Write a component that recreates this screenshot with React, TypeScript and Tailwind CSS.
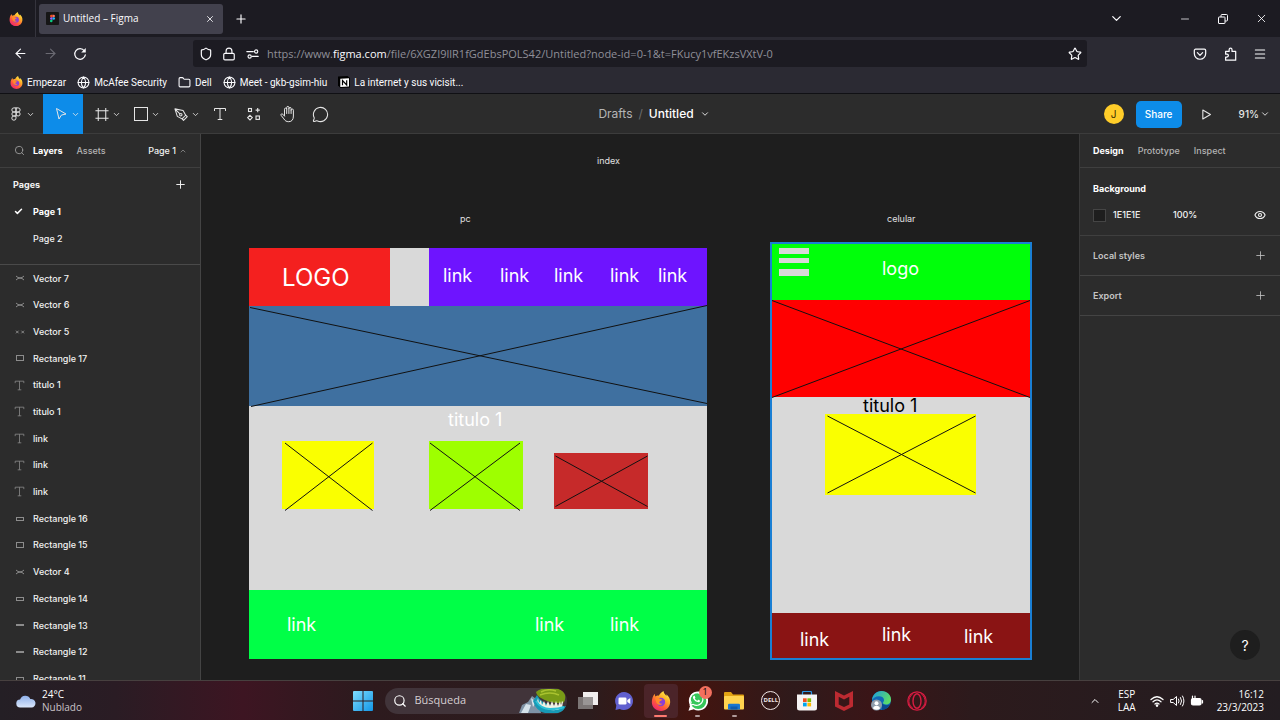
import type { ReactNode } from "react";
import {
  ArrowLeft,
  ArrowRight,
  Check,
  ChevronDown,
  ChevronUp,
  Eye,
  Folder,
  Globe,
  Lock,
  Menu,
  MessageCircle,
  Minus,
  Plus,
  Search,
  Shield,
  Star,
  X,
} from "lucide-react";
import { FaWhatsapp } from "react-icons/fa";

/* ---------- Icons ---------- */

function FirefoxIcon({ id, className }: { id: string; className: string }) {
  return (
    <svg viewBox="0 0 24 24" className={className} aria-hidden="true">
      <defs>
        <linearGradient id={id} x1="0.85" y1="0.05" x2="0.25" y2="0.95">
          <stop offset="0" stopColor="#fff44f" />
          <stop offset="0.35" stopColor="#ffb028" />
          <stop offset="0.7" stopColor="#ff5a3a" />
          <stop offset="1" stopColor="#f0286e" />
        </linearGradient>
      </defs>
      <path
        d="M1 13.500C1 9 2.300 6 4.500 3.300c0 1.400.3 2.400.9 3.200C6.500 5.500 8 5.200 9.300 5.600 10.800 3.500 12.500 1.200 15 0c.2 2.800 2 4 3.500 6 .2-.8.1-1.500-.1-2.200C21.500 6.300 23.200 9.500 23 13.500 22.700 19.500 18 24 12 24S1 19.500 1 13.500z"
        fill={`url(#${id})`}
      />
      <circle cx="12" cy="13.200" r="5" fill="#8a3fd6" />
      <path d="M5 8.500c2-.8 4.500-.4 6 1 1.200.1 2.200.4 2.800 1.200-1.500.2-2.300 1.200-3.300 1.800-1.500.9.300 3.600 3.300 2.500-1.500 2.500-6.500 2-7.500-1.500z" fill="#ff8a2a" />
    </svg>
  );
}

function FigmaOutline() {
  return (
    <svg viewBox="0 0 12 16" className="h-[14px] w-[18px]" fill="none" stroke="currentColor" strokeWidth="1.1">
      <path d="M6 1H3.600a2.300 2.300 0 0 0 0 4.700H6zM6 1h2.400a2.300 2.300 0 0 1 0 4.700H6zM6 5.700H3.600a2.300 2.300 0 0 0 0 4.600H6zM6 10.300H3.600a2.400 2.400 0 1 0 2.400 2.400z" />
      <circle cx="8.400" cy="8" r="2.300" />
    </svg>
  );
}

function FigmaColor() {
  return (
    <svg viewBox="0 0 14 14" className="size-[13px]" aria-hidden="true">
      <rect width="14" height="14" rx="1" fill="#161616" />
      <path d="M7 3H5.700a1.350 1.350 0 0 0 0 2.700H7z" fill="#f24e1e" />
      <path d="M7 3h1.300a1.350 1.350 0 0 1 0 2.700H7z" fill="#ff7262" />
      <path d="M7 5.700H5.700a1.350 1.350 0 0 0 0 2.700H7z" fill="#a259ff" />
      <circle cx="8.350" cy="7.050" r="1.350" fill="#1abcfe" />
      <path d="M7 8.400H5.700A1.350 1.350 0 1 0 7 9.750z" fill="#0acf83" />
    </svg>
  );
}

function ReloadIcon() {
  return (
    <svg viewBox="0 0 16 16" className="size-[14px]" fill="none" stroke="currentColor" strokeWidth="1.400">
      <path d="M13 4.300A6.100 6.100 0 1 0 14.100 9" strokeLinecap="round" />
      <path d="M14.600 1v5.200H9.400z" fill="currentColor" stroke="none" />
    </svg>
  );
}

function PermissionIcon() {
  return (
    <svg viewBox="0 0 16 12" className="h-[10px] w-[13px]" fill="none" stroke="currentColor" strokeWidth="1.400" strokeLinecap="round">
      <path d="M1 3h8M7.500 9H15" />
      <circle cx="12.500" cy="3" r="2" />
      <circle cx="4.500" cy="9" r="2" />
    </svg>
  );
}

function PocketIcon() {
  return (
    <svg viewBox="0 0 16 16" className="size-[14px]" fill="none" stroke="currentColor" strokeWidth="1.400" strokeLinecap="round" strokeLinejoin="round">
      <path d="M3 2.500h10A1.500 1.500 0 0 1 14.500 4v3.500a6.500 6.500 0 0 1-13 0V4A1.500 1.500 0 0 1 3 2.500z" />
      <path d="M5 6.500l3 3 3-3" />
    </svg>
  );
}

function ExtensionIcon() {
  return (
    <svg viewBox="0 0 16 16" className="size-[14px]" fill="none" stroke="currentColor" strokeWidth="1.400" strokeLinejoin="round">
      <path d="M3 15V11.500h1.500a1.600 1.600 0 0 0 0-3.300H3V5h4V3a1.600 1.600 0 0 1 3.300 0v2H14.500v10z" />
    </svg>
  );
}

function RestoreIcon() {
  return (
    <svg viewBox="0 0 10 10" className="size-[10px]" fill="none" stroke="currentColor" strokeWidth="1">
      <rect x="0.500" y="3" width="6.500" height="6.500" rx="0.500" />
      <path d="M3 3V1.500a1 1 0 0 1 1-1h4.500a1 1 0 0 1 1 1V6a1 1 0 0 1-1 1H7" />
    </svg>
  );
}

function NotionIcon() {
  return (
    <svg viewBox="0 0 12 12" className="size-[12px]" aria-hidden="true">
      <path d="M0 0.500L9.500 0 12 2v9.500L2.500 12 0 9.500z" fill="#000" />
      <path d="M2.300 2.800L11 2.300v8.200l-8.700.6z" fill="#fff" />
      <path d="M4.500 9.300V4.500L8.700 9V4.200" fill="none" stroke="#000" strokeWidth="1.200" />
    </svg>
  );
}

function MoveIcon() {
  return (
    <svg viewBox="0 0 14 14" className="h-[14px] w-[18px]" fill="none" stroke="currentColor" strokeWidth="1" strokeLinejoin="round">
      <path d="M2.500 1.500l9.500 5.500-4.600 1.100L5 12z" />
    </svg>
  );
}

function FrameIcon() {
  return (
    <svg viewBox="0 0 16 16" className="h-[15px] w-[18px]" fill="none" stroke="currentColor" strokeWidth="1.100">
      <path d="M4 1v14M12 1v14M1 4h14M1 12h14" />
    </svg>
  );
}

function RectIcon() {
  return (
    <svg viewBox="0 0 16 16" className="h-[16px] w-[18px]" fill="none" stroke="currentColor" strokeWidth="1">
      <rect x="1.500" y="1.500" width="13" height="13" />
    </svg>
  );
}

function PenIcon() {
  return (
    <svg viewBox="0 0 16 16" className="h-[15px] w-[18px]" fill="none" stroke="currentColor" strokeWidth="1.100" strokeLinejoin="round">
      <path d="M1.500 2l8.700 1.800 2.800 5-3.900 3.900-5-2.700zM1.500 2l5.300 5.300M13 8.700l1.700 1.600-4 4-1.600-1.600" />
      <circle cx="7.800" cy="8.200" r="1.300" />
    </svg>
  );
}

function TextToolIcon({ className }: { className: string }) {
  return (
    <svg viewBox="0 0 14 14" className={className} fill="none" stroke="currentColor" strokeWidth="1">
      <path d="M1.500 4V1.500h11V4M7 1.500v11M4.700 12.500h4.600" />
    </svg>
  );
}

function ResourcesIcon() {
  return (
    <svg viewBox="0 0 14 14" className="size-[14px]" fill="none" stroke="currentColor" strokeWidth="1.100">
      <rect x="1.500" y="1.500" width="3" height="3" />
      <path d="M10.700 1v4.200M8.600 3.100h4.200M3 8.300l2.300 2.300L3 12.900.700 10.600z" />
      <rect x="9" y="9" width="3.400" height="3.400" />
    </svg>
  );
}

function HandIcon() {
  return (
    <svg viewBox="0 0 18 18" className="size-[18px]" fill="none" stroke="currentColor" strokeWidth="1" strokeLinecap="round" strokeLinejoin="round">
      <path d="M5.500 10.500V4.200a1.100 1.100 0 0 1 2.200 0V8.500M7.700 4V2.500a1.100 1.100 0 0 1 2.200 0V8.500M9.900 3.500a1.100 1.100 0 0 1 2.200 0v5M12.100 5.200a1.100 1.100 0 0 1 2.300 0V11c0 3.500-1.500 5.700-4.700 5.700-2.300 0-3.700-.9-4.800-2.800L2.100 10.400c-.7-1.200.8-2.200 1.700-1.200l1.700 2" />
    </svg>
  );
}

function PlayIcon() {
  return (
    <svg viewBox="0 0 12 12" className="size-[11px]" fill="none" stroke="currentColor" strokeWidth="1.200" strokeLinejoin="round">
      <path d="M2 1.200l8.300 4.800L2 10.800z" />
    </svg>
  );
}

type LayerKind = "cross" | "dots" | "box" | "text" | "bar" | "flat";

function LayerIcon({ kind }: { kind: LayerKind }) {
  if (kind === "text") return <TextToolIcon className="size-[11px]" />;
  return (
    <svg viewBox="0 0 10 10" className="size-[10px]" fill="none" stroke="currentColor" strokeWidth="1">
      {kind === "cross" && <path d="M1 3q4 4 8 0M1 7q4-4 8 0" />}
      {kind === "dots" && <path d="M1 3.700l2.600 2.600M3.600 3.700L1 6.300M6.400 3.700L9 6.300M9 3.700L6.400 6.300" />}
      {kind === "box" && <rect x="1.500" y="2.500" width="7" height="5" />}
      {kind === "flat" && <rect x="1.500" y="3.500" width="7" height="3" />}
      {kind === "bar" && <path d="M1 5h8" strokeWidth="2" />}
    </svg>
  );
}

/* ---------- Browser chrome ---------- */

function IconButton({ label, className, children }: { label: string; className: string; children: ReactNode }) {
  return (
    <button type="button" aria-label={label} className={`flex shrink-0 items-center justify-center ${className}`}>
      {children}
    </button>
  );
}

function BrowserChrome() {
  return (
    <header className="shrink-0 border-b border-[#101014] bg-[#2b2a33] font-['Open_Sans','Noto_Sans',sans-serif] text-[#fbfbfe]">
      <div className="flex h-[37px] items-center bg-[#1c1b22]">
        <div className="flex h-full w-9 items-center border-r border-[#35343d] pl-[9px]">
          <FirefoxIcon id="ff-window" className="size-[14px]" />
        </div>
        <div className="ml-[3px] flex h-[30px] w-[184px] items-center rounded-[3px] bg-[#42414d] pr-2 pl-[7px]">
          <FigmaColor />
          <span className="ml-1 flex-1 text-[10px]">Untitled – Figma</span>
          <IconButton label="Close tab" className="size-[11px]">
            <X size={10} strokeWidth={2} />
          </IconButton>
        </div>
        <IconButton label="New tab" className="w-9">
          <Plus size={14} strokeWidth={2} />
        </IconButton>
        <div className="flex-1" />
        <IconButton label="List all tabs" className="mr-[30px] w-10">
          <ChevronDown size={15} strokeWidth={2} />
        </IconButton>
        <IconButton label="Minimize" className="w-[38px]">
          <Minus size={12} strokeWidth={1.5} />
        </IconButton>
        <IconButton label="Restore" className="w-[38px]">
          <RestoreIcon />
        </IconButton>
        <IconButton label="Close window" className="w-[38px]">
          <X size={13} strokeWidth={1.6} />
        </IconButton>
      </div>

      <div className="flex h-[33px] items-center px-[5px]">
        <IconButton label="Back" className="w-[30px]">
          <ArrowLeft size={15} strokeWidth={1.8} />
        </IconButton>
        <IconButton label="Forward" className="w-[30px] text-[#6b6a73]">
          <ArrowRight size={15} strokeWidth={1.8} />
        </IconButton>
        <IconButton label="Reload" className="w-[30px]">
          <ReloadIcon />
        </IconButton>
        <div className="mx-[98px] flex h-[27px] flex-1 items-center rounded-[3px] bg-[#1c1b22] pr-[5px] pl-[6px]">
          <Shield size={14} strokeWidth={2} />
          <Lock size={14} strokeWidth={2} className="ml-[9px]" />
          <span className="ml-[10px]">
            <PermissionIcon />
          </span>
          <span className="ml-2 flex-1 pt-px text-[11px] text-[#8f8f98]">
            https://www.<span className="text-[#fbfbfe]">figma.com</span>
            /file/6XGZI9llR1fGdEbsPOLS42/Untitled?node-id=0-1&amp;t=FKucy1vfEKzsVXtV-0
          </span>
          <IconButton label="Bookmark this page" className="size-[15px]">
            <Star size={14} strokeWidth={2} />
          </IconButton>
        </div>
        <IconButton label="Save to Pocket" className="w-[30px]">
          <PocketIcon />
        </IconButton>
        <IconButton label="Extensions" className="w-[30px]">
          <ExtensionIcon />
        </IconButton>
        <IconButton label="Open application menu" className="w-[30px]">
          <Menu size={14} strokeWidth={1.8} />
        </IconButton>
      </div>

      <nav aria-label="Bookmarks" className="flex h-[23px] items-center gap-[11px] pt-px pl-[10px] font-['Roboto','Open_Sans',sans-serif] text-[10px]">
        <a href="#empezar" className="flex items-center gap-1">
          <FirefoxIcon id="ff-bookmark" className="size-[13px]" />
          Empezar
        </a>
        <a href="#mcafee" className="flex items-center gap-1">
          <Globe size={13} strokeWidth={2} />
          McAfee Security
        </a>
        <a href="#dell" className="flex items-center gap-1">
          <Folder size={13} strokeWidth={2} />
          Dell
        </a>
        <a href="#meet" className="flex items-center gap-1">
          <Globe size={13} strokeWidth={2} />
          Meet - gkb-gsim-hiu
        </a>
        <a href="#notion" className="flex items-center gap-1">
          <NotionIcon />
          La internet y sus vicisit...
        </a>
      </nav>
    </header>
  );
}

/* ---------- Editor ---------- */

function ToolWithMenu({ label, className, children }: { label: string; className: string; children: ReactNode }) {
  return (
    <button type="button" aria-label={label} className={`flex h-full shrink-0 items-center gap-px ${className}`}>
      {children}
      <ChevronDown size={9} strokeWidth={2.2} />
    </button>
  );
}

function EditorToolbar() {
  return (
    <div className="grid h-10 shrink-0 grid-cols-[1fr_auto_1fr] items-center border-b border-[#3c3c3c] bg-[#2c2c2c] text-[#e6e6e6]">
      <div className="flex h-10 items-center">
        <ToolWithMenu label="Main menu" className="w-[43px] pl-[7px]">
          <FigmaOutline />
        </ToolWithMenu>
        <ToolWithMenu label="Move" className="w-10 bg-[#0d8ce9] pl-[9px]">
          <MoveIcon />
        </ToolWithMenu>
        <ToolWithMenu label="Frame" className="w-10 pl-[10px]">
          <FrameIcon />
        </ToolWithMenu>
        <ToolWithMenu label="Rectangle" className="w-10 pl-[9px]">
          <RectIcon />
        </ToolWithMenu>
        <ToolWithMenu label="Pen" className="w-10 pl-[9px]">
          <PenIcon />
        </ToolWithMenu>
        <IconButton label="Text" className="w-[34px]">
          <TextToolIcon className="size-[14px]" />
        </IconButton>
        <IconButton label="Resources" className="w-[34px]">
          <ResourcesIcon />
        </IconButton>
        <IconButton label="Hand tool" className="w-[33px]">
          <HandIcon />
        </IconButton>
        <IconButton label="Comment" className="w-[33px]">
          <MessageCircle size={17} strokeWidth={1.5} />
        </IconButton>
      </div>
      <div className="flex items-center pl-[28px] text-[12px]">
        <span className="text-[#b5b5b5]">Drafts</span>
        <span className="px-[6px] text-[#6d6d6d]">/</span>
        <button type="button" className="flex items-center gap-[6px] font-medium text-white">
          Untitled
          <ChevronDown size={10} strokeWidth={2} />
        </button>
      </div>
      <div className="flex items-center justify-end pr-[10px]">
        <span className="flex size-5 items-center justify-center rounded-full bg-[#ffcd29] text-[10px] text-[#3a2d00]">J</span>
        <button type="button" className="ml-3 h-[27px] w-[46px] rounded-[5px] bg-[#0d8ce9] text-[10px] font-medium text-white">
          Share
        </button>
        <IconButton label="Present" className="w-[50px]">
          <PlayIcon />
        </IconButton>
        <button type="button" className="ml-[7px] flex items-center gap-px text-[10px] font-medium">
          91%
          <ChevronDown size={10} strokeWidth={2.2} />
        </button>
      </div>
    </div>
  );
}

const layers: { name: string; kind: LayerKind }[] = [
  { name: "Vector 7", kind: "cross" },
  { name: "Vector 6", kind: "cross" },
  { name: "Vector 5", kind: "dots" },
  { name: "Rectangle 17", kind: "box" },
  { name: "titulo 1", kind: "text" },
  { name: "titulo 1", kind: "text" },
  { name: "link", kind: "text" },
  { name: "link", kind: "text" },
  { name: "link", kind: "text" },
  { name: "Rectangle 16", kind: "flat" },
  { name: "Rectangle 15", kind: "box" },
  { name: "Vector 4", kind: "cross" },
  { name: "Rectangle 14", kind: "flat" },
  { name: "Rectangle 13", kind: "bar" },
  { name: "Rectangle 12", kind: "bar" },
  { name: "Rectangle 11", kind: "flat" },
];

function LayersPanel() {
  return (
    <aside className="flex w-[201px] shrink-0 flex-col border-r border-[#444444] bg-[#2c2c2c] text-[9px] font-medium text-[#f2f2f2]">
      <div className="flex h-[34px] shrink-0 items-center border-b border-[#3f3f3f] pr-[13px] pl-[14px]">
        <IconButton label="Search layers" className="mr-2 w-[11px] text-[#9a9a9a]">
          <Search size={11} strokeWidth={2} />
        </IconButton>
        <button type="button" className="font-bold text-white">Layers</button>
        <button type="button" className="ml-[14px] text-[#b3b3b3]">Assets</button>
        <button type="button" className="ml-auto flex items-center gap-[3px]">
          Page 1
          <ChevronUp size={8} strokeWidth={2.5} className="text-[#8a8a8a]" />
        </button>
      </div>
      <section className="shrink-0 border-b border-[#4a4a4a] pt-[3px] pb-3">
        <div className="flex h-[27px] items-center justify-between pr-[13px] pl-[13px]">
          <h2 className="font-bold">Pages</h2>
          <IconButton label="Add page" className="size-[14px]">
            <Plus size={13} strokeWidth={1.8} />
          </IconButton>
        </div>
        <ul>
          <li className="flex h-[27px] items-center pl-[14px] font-bold text-white">
            <Check size={9} strokeWidth={4} className="mr-[10px]" />
            Page 1
          </li>
          <li className="flex h-[27px] items-center pl-[33px]">Page 2</li>
        </ul>
      </section>
      <div className="min-h-0 flex-1 overflow-hidden">
        <ul className="flex h-[427px] flex-col">
          {layers.map((layer, index) => (
            <li key={index} className="flex flex-1 items-center pl-[14px]">
              <span className="mr-2 flex w-[11px] justify-center text-[#8c8c8c]">
                <LayerIcon kind={layer.kind} />
              </span>
              {layer.name}
            </li>
          ))}
        </ul>
      </div>
    </aside>
  );
}

function CanvasText({ className, children }: { className: string; children: ReactNode }) {
  return <span className={`absolute leading-6 whitespace-nowrap ${className}`}>{children}</span>;
}

const desktopLinks = [
  { place: "left-[194px] top-[16px]" },
  { place: "left-[251px] top-[16px]" },
  { place: "left-[305px] top-[16px]" },
  { place: "left-[361px] top-[16px]" },
  { place: "left-[409px] top-[16px]" },
  { place: "left-[38px] top-[365px]" },
  { place: "left-[286px] top-[365px]" },
  { place: "left-[361px] top-[365px]" },
];

function DesktopFrame() {
  return (
    <div className="absolute top-[114px] left-[48px] h-[411px] w-[458px] bg-[#d9d9d9] text-[18px] text-white">
      <div className="absolute top-0 left-0 h-[58px] w-[141px] bg-[#f4201f]" />
      <div className="absolute top-0 left-[180px] h-[58px] w-[278px] bg-[#6e14ff]" />
      <div className="absolute top-[58px] left-0 h-[100px] w-[458px] bg-[#3f70a0]" />
      <div className="absolute top-[193px] left-[33px] h-[68px] w-[92px] bg-[#faff00]" />
      <div className="absolute top-[193px] left-[180px] h-[68px] w-[94px] bg-[#9eff00]" />
      <div className="absolute top-[205px] left-[305px] h-[56px] w-[94px] bg-[#c62a2a]" />
      <div className="absolute top-[342px] left-0 h-[69px] w-[458px] bg-[#00ff47]" />
      <svg viewBox="0 0 458 411" className="absolute inset-0 size-full" fill="none" stroke="#111" strokeWidth="1">
        <path d="M1 59.500L458 155.500M2 158.500L458 57.500" />
        <path d="M36 195L123.500 262.500M36 262.500L123.500 195" />
        <path d="M181 195L271 262.500M181 262.500L271 195" />
        <path d="M306.500 208L398.500 258.500M306.500 258.500L398.500 208" />
      </svg>
      <CanvasText className="top-[18px] left-[33px] text-[24px]">LOGO</CanvasText>
      <CanvasText className="top-[160px] left-[199px]">titulo 1</CanvasText>
      {desktopLinks.map((link) => (
        <CanvasText key={link.place} className={link.place}>
          link
        </CanvasText>
      ))}
    </div>
  );
}

function MobileFrame() {
  return (
    <div className="absolute top-[108px] left-[569px] h-[418px] w-[262px] border-2 border-[#1a7fd4] bg-[#d9d9d9] text-[18px] text-white">
      <div className="absolute inset-x-0 top-0 h-[56px] bg-[#00ff0a]" />
      <div className="absolute top-[4px] left-[7px] h-[6px] w-[30px] bg-[#d9d9d9]" />
      <div className="absolute top-[14px] left-[7px] h-[5px] w-[30px] bg-[#d9d9d9]" />
      <div className="absolute top-[25px] left-[7px] h-[7px] w-[30px] bg-[#d9d9d9]" />
      <div className="absolute inset-x-0 top-[56px] h-[97px] bg-[#ff0000]" />
      <div className="absolute top-[170px] left-[53px] h-[81px] w-[151px] bg-[#faff00]" />
      <div className="absolute inset-x-0 bottom-0 h-[45px] bg-[#8a1414]" />
      <svg viewBox="0 0 258 414" className="absolute inset-0 size-full" fill="none" stroke="#111" strokeWidth="1">
        <path d="M0 56.500L258 153.500M0 153.500L258 56.500" />
        <path d="M55.500 172L203.500 249M55.500 249L203.500 172" />
      </svg>
      <CanvasText className="top-[13px] left-[110px]">logo</CanvasText>
      <CanvasText className="top-[150px] left-[91px] text-black">titulo 1</CanvasText>
      <CanvasText className="top-[384px] left-[28px]">link</CanvasText>
      <CanvasText className="top-[379px] left-[110px]">link</CanvasText>
      <CanvasText className="top-[381px] left-[192px]">link</CanvasText>
    </div>
  );
}

function Canvas() {
  return (
    <main className="relative min-w-0 flex-1 overflow-hidden bg-[#1e1e1e] text-[#e0e0e0]">
      <CanvasText className="top-[15px] left-[396px] text-[9px]">index</CanvasText>
      <CanvasText className="top-[73px] left-[259px] text-[9px]">pc</CanvasText>
      <CanvasText className="top-[73px] left-[686px] text-[9px]">celular</CanvasText>
      <DesktopFrame />
      <MobileFrame />
    </main>
  );
}

function DesignPanel() {
  return (
    <aside className="relative w-[201px] shrink-0 border-l border-[#3a3a3a] bg-[#2c2c2c] text-[9px] font-medium text-[#f2f2f2]">
      <div className="flex h-[34px] items-center gap-[14px] border-b border-[#3f3f3f] pl-[13px] text-[#b3b3b3]">
        <button type="button" className="font-bold text-white">Design</button>
        <button type="button">Prototype</button>
        <button type="button">Inspect</button>
      </div>
      <section className="border-b border-[#3f3f3f] px-[13px] pt-[7px] pb-[7px]">
        <h2 className="flex h-[27px] items-center font-bold text-white">Background</h2>
        <div className="flex h-[26px] items-center">
          <span className="size-[13px] border border-[#454545] bg-[#1e1e1e]" />
          <span className="ml-[7px] w-[60px]">1E1E1E</span>
          <span>100%</span>
          <IconButton label="Toggle background" className="ml-auto w-[14px]">
            <Eye size={12} strokeWidth={2.2} />
          </IconButton>
        </div>
      </section>
      {["Local styles", "Export"].map((title) => (
        <section key={title} className="flex h-10 items-center justify-between border-b border-[#444444] px-[13px] text-[#c4c4c4]">
          <h2 className="font-semibold">{title}</h2>
          <IconButton label={`Add ${title}`} className="w-[14px]">
            <Plus size={13} strokeWidth={1.5} />
          </IconButton>
        </section>
      ))}
      <button
        type="button"
        aria-label="Help"
        className="absolute right-5 bottom-5 flex size-[30px] items-center justify-center rounded-full bg-[#1e1e1e] text-[14px] font-normal text-white"
      >
        ?
      </button>
    </aside>
  );
}

/* ---------- Taskbar ---------- */

function WeatherIcon() {
  return (
    <svg viewBox="0 0 20 14" className="h-[14px] w-5" aria-hidden="true">
      <defs>
        <linearGradient id="cloud" x1="0" y1="0" x2="0" y2="1">
          <stop offset="0" stopColor="#8fb0ea" />
          <stop offset="1" stopColor="#dbe7fb" />
        </linearGradient>
      </defs>
      <path d="M4.500 13.500a4 4 0 0 1-.4-8A5.500 5.500 0 0 1 14.300 5a4.300 4.300 0 1 1 1.200 8.500z" fill="url(#cloud)" />
    </svg>
  );
}

function WindowsIcon() {
  return (
    <svg viewBox="0 0 20 20" className="size-5" aria-hidden="true">
      <defs>
        <linearGradient id="win" x1="0" y1="0" x2="1" y2="1">
          <stop offset="0" stopColor="#7fdcff" />
          <stop offset="1" stopColor="#1296e6" />
        </linearGradient>
      </defs>
      <path d="M0 1q0-1 1-1h8.500v9.500H0zM10.500 0H19q1 0 1 1v8.500h-9.500zM0 10.500h9.500V20H1q-1 0-1-1zM10.500 10.500H20V19q0 1-1 1h-8.500z" fill="url(#win)" />
    </svg>
  );
}

function SearchArt() {
  return (
    <svg viewBox="0 0 48 24" className="h-6 w-12" aria-hidden="true">
      <path d="M0 24l3-8 6-3 4-6 7 5 2 12z" fill="#7f93a6" />
      <path d="M2 24l5-9 5 1-3 8zM12 9l5 4-3 5z" fill="#d5e2ea" />
      <path d="M14 12l4-6q4 8 14 10t15 1q-1 5-8 7H26Q17 22 14 12z" fill="#1799b5" />
      <path d="M17 3q4-4 14-4 13 0 15 7 1 6-2 8Q31 15 22 9q-4-2-5-6z" fill="#789a16" />
      <path d="M22 3q7-4 15-1M21 6q10-4 19 0" stroke="#a9c22f" strokeWidth="1.500" fill="none" />
      <path d="M19 9l1 5 2-3 1 5 2-4 2 5 2-5 2 5 2-5 2 5 2-5 2 5 2-5 1 4 1-4 1 1-1 6q-7 4-15 1T18 13z" fill="#f2f0e2" />
      <path d="M17 12q5 8 14 8t14-2" stroke="#2bc0d6" strokeWidth="2" fill="none" />
    </svg>
  );
}

function TaskViewIcon() {
  return (
    <svg viewBox="0 0 20 20" className="size-5" aria-hidden="true">
      <rect x="5" y="1" width="15" height="13" fill="#f1eeee" />
      <rect x="0" y="6" width="15" height="12" fill="#8a8585" opacity="0.850" />
    </svg>
  );
}

function ChatIcon() {
  return (
    <svg viewBox="0 0 20 20" className="size-5" aria-hidden="true">
      <path d="M10 1a9 9 0 1 1-4.300 16.900L1.500 19l.8-4.500A9 9 0 0 1 10 1z" fill="#6160cf" />
      <rect x="4.500" y="6.500" width="8" height="7" rx="1.300" fill="#fff" />
      <path d="M13.300 9l3-2v6l-3-2z" fill="#fff" />
    </svg>
  );
}

function WhatsappIcon() {
  return (
    <svg viewBox="0 0 20 20" className="size-5" aria-hidden="true">
      <path d="M10.300.500a9.500 9.500 0 1 1-4.500 17.700L.500 19.700l1.600-5A9.500 9.500 0 0 1 10.300.500z" fill="#fff" />
      <circle cx="10.300" cy="10" r="8" fill="#35c759" />
      <FaWhatsapp x="0.500" y="0" width="19" height="19" style={{ fill: "#ffffff" }} />
    </svg>
  );
}

function ExplorerIcon() {
  return (
    <svg viewBox="0 0 20 20" className="size-5" aria-hidden="true">
      <path d="M0 2q0-1 1-1h6l2 2.500h10q1 0 1 1V8H0z" fill="#e2a213" />
      <rect y="5" width="20" height="13.500" rx="1" fill="#ffd34f" />
      <path d="M4 18.500V14q0-1.300 1.300-1.300h9.400Q16 12.700 16 14v4.500z" fill="#1976d0" />
      <path d="M6.500 15.500h7v3h-7z" fill="#0f5bac" />
    </svg>
  );
}

function DellIcon() {
  return (
    <span className="flex size-[19px] items-center justify-center rounded-full border border-[#f0e6e6] text-[6px] font-bold text-[#f0e6e6]">
      DELL
    </span>
  );
}

function StoreIcon() {
  return (
    <svg viewBox="0 0 20 20" className="size-5" aria-hidden="true">
      <path d="M5.500 4V1.500q0-1 1-1h7q1 0 1 1V4" fill="none" stroke="#2a95e4" strokeWidth="1.200" />
      <path d="M0 3.500h20V17q0 2.500-2.500 2.500h-15Q0 19.500 0 17z" fill="#f6f4f4" />
      <path d="M6 7.300h3.700V11H6z" fill="#f25022" />
      <path d="M10.400 7.300h3.700V11h-3.700z" fill="#7fba00" />
      <path d="M6 11.700h3.700v3.700H6z" fill="#00a4ef" />
      <path d="M10.400 11.700h3.700v3.700h-3.700z" fill="#ffb900" />
    </svg>
  );
}

function McafeeIcon() {
  return (
    <svg viewBox="0 0 20 20" className="size-5" aria-hidden="true">
      <path d="M1 0l9 4.500L19 0v15.500L10 20l-9-4.500zM4.700 5.800v7.600L10 16l5.300-2.600V5.800L10 8.500z" fill="#bd2a31" fillRule="evenodd" />
    </svg>
  );
}

function EdgeIcon() {
  return (
    <svg viewBox="0 0 20 20" className="size-5" aria-hidden="true">
      <defs>
        <linearGradient id="edge" x1="0" y1="0" x2="1" y2="0.400">
          <stop offset="0" stopColor="#1c9be0" />
          <stop offset="1" stopColor="#5bdc6a" />
        </linearGradient>
      </defs>
      <circle cx="10.500" cy="9.500" r="9.500" fill="#1169b8" />
      <path d="M1 9.500C1 4 5.500 0 10.500 0 16 0 20 4 20 8.500c0 3-2 5-5 5-2 0-3-.8-3-1.700s1-1.200 1-2.800c0-2-2-3.700-5-3.700-3.500 0-6 2-7 4.200z" fill="url(#edge)" />
      <path d="M11 12.500q3 3 8 1-3 5-8 5.500z" fill="#0b4a8f" />
      <circle cx="5.500" cy="14" r="5.500" fill="#8f9dab" />
      <circle cx="5.500" cy="12.300" r="2" fill="#fff" />
      <path d="M2 17.500q.5-2.800 3.500-2.800T9 17.500q-3 2.700-7 0z" fill="#fff" />
    </svg>
  );
}

function OperaIcon() {
  return (
    <svg viewBox="0 0 20 20" className="size-5" fill="none" stroke="#d91c42" aria-hidden="true">
      <circle cx="10" cy="10" r="9.200" strokeWidth="1.200" />
      <ellipse cx="10" cy="10" rx="4" ry="7.300" strokeWidth="1.400" />
      <path d="M6 2.500C.500 7 .500 13.500 6 17.500M14 2.500C19.500 7 19.500 13.500 14 17.500" strokeWidth="1" />
    </svg>
  );
}

function TaskbarApp({ label, active, running, children }: { label: string; active?: boolean; running?: boolean; children: ReactNode }) {
  return (
    <button type="button" aria-label={label} className="flex h-full flex-1 items-center justify-center">
      <span className={`relative flex h-[34px] w-[34px] items-center justify-center rounded-[4px] ${active ? "bg-[#4b2429]" : ""}`}>
        {children}
        {active && <span className="absolute bottom-[1px] h-[2px] w-[13px] rounded-full bg-[#ff7a70]" />}
        {running && <span className="absolute bottom-[1px] h-[2px] w-[5px] rounded-full bg-[#b09a9a]" />}
      </span>
    </button>
  );
}

function TrayIcons() {
  return (
    <svg viewBox="0 0 54 14" className="h-[14px] w-[54px]" fill="none" stroke="currentColor" strokeWidth="1.200" strokeLinecap="round" aria-hidden="true">
      <path d="M1 5.500Q7 0 13 5.500M3 7.800q4-3.700 8 0M5 10q2-1.800 4 0" />
      <circle cx="7" cy="11.600" r="0.700" fill="currentColor" />
      <path d="M21 5.500h2.200L26.500 2.500v9L23.200 8.500H21zM28.500 5q1.300 2 0 4M30.500 3.500q2.300 3.500 0 7M32.500 2q3 5 0 10" strokeLinejoin="round" strokeWidth="1" />
      <rect x="41.500" y="4.500" width="9.500" height="6.500" rx="1.500" fill="currentColor" />
      <path d="M52.500 6.500v2.500M42.500 2v2.500M45 2v2.500" />
    </svg>
  );
}

function Taskbar() {
  return (
    <footer className="grid h-10 shrink-0 grid-cols-[1fr_auto_1fr] items-center border-t border-[#47403f] bg-[linear-gradient(90deg,#241f25_0%,#2a1c24_9%,#3d1522_19%,#2d1a1e_28%,#2c1c1d_46%,#43140f_54%,#2f1a1b_62%,#3a1517_68%,#2c1a1c_76%,#231d21_100%)] font-['Open_Sans','Noto_Sans',sans-serif] text-white">
      <div className="flex items-center gap-[6px] pl-4 text-[10px] leading-[13px]">
        <WeatherIcon />
        <div>
          <p>24°C</p>
          <p className="text-[#c9c3c7]">Nublado</p>
        </div>
      </div>
      <div className="flex h-full items-center">
        <IconButton label="Start" className="h-full w-9">
          <WindowsIcon />
        </IconButton>
        <label className="ml-1 flex h-[26px] w-[182px] items-center overflow-hidden rounded-full bg-[#41343a] pl-2">
          <Search size={14} strokeWidth={2} className="shrink-0" />
          <input
            type="text"
            aria-label="Búsqueda"
            placeholder="Búsqueda"
            className="ml-2 w-0 min-w-0 flex-1 bg-transparent text-[11px] placeholder:text-[#d5ced1] placeholder:opacity-100"
          />
          <SearchArt />
        </label>
        <div className="ml-[3px] flex h-full w-[366px] items-center">
          <TaskbarApp label="Task view"><TaskViewIcon /></TaskbarApp>
          <TaskbarApp label="Chat"><ChatIcon /></TaskbarApp>
          <TaskbarApp label="Firefox" active><FirefoxIcon id="ff-taskbar" className="size-5" /></TaskbarApp>
          <TaskbarApp label="WhatsApp" running>
            <WhatsappIcon />
            <span className="absolute top-[2px] right-[3px] flex size-[13px] items-center justify-center rounded-full bg-[#f2705f] text-[9px] text-black">1</span>
          </TaskbarApp>
          <TaskbarApp label="File Explorer" running><ExplorerIcon /></TaskbarApp>
          <TaskbarApp label="Dell"><DellIcon /></TaskbarApp>
          <TaskbarApp label="Microsoft Store"><StoreIcon /></TaskbarApp>
          <TaskbarApp label="McAfee"><McafeeIcon /></TaskbarApp>
          <TaskbarApp label="Edge"><EdgeIcon /></TaskbarApp>
          <TaskbarApp label="Opera GX"><OperaIcon /></TaskbarApp>
        </div>
      </div>
      <div className="flex items-center justify-end pr-4 text-[10px] leading-[13px]">
        <ChevronUp size={12} strokeWidth={2} />
        <p className="mr-[14px] ml-[17px] text-center">
          ESP
          <br />
          LAA
        </p>
        <TrayIcons />
        <p className="ml-[13px] text-right">
          16:12
          <br />
          23/3/2023
        </p>
      </div>
    </footer>
  );
}

export default function App() {
  return (
    <div className="flex h-screen flex-col overflow-hidden bg-[#1e1e1e] font-['Inter',sans-serif]">
      <BrowserChrome />
      <EditorToolbar />
      <div className="flex min-h-0 flex-1">
        <LayersPanel />
        <Canvas />
        <DesignPanel />
      </div>
      <Taskbar />
    </div>
  );
}
